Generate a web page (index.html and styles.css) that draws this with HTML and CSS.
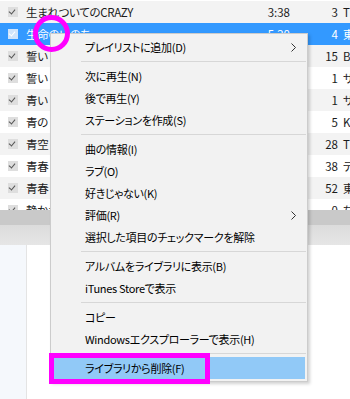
FILE: index.html
```html
<!DOCTYPE html>
<html lang="ja">
<head>
<meta charset="utf-8">
<link rel="stylesheet" href="styles.css">
</head>
<body>
<div class="page">
  <div class="list">
    <div class="row even"><span class="cb"></span><span class="title">生まれついてのCRAZY</span><span class="time">3:38</span><span class="num">3</span><span class="artist">T</span></div>
    <div class="row sel"><span class="cb"></span><span class="title">生命のいのち</span><span class="time">5:20</span><span class="num">4</span><span class="artist">東</span></div>
    <div class="row even"><span class="cb"></span><span class="title">誓い</span><span class="time">4:12</span><span class="num">15</span><span class="artist">B</span></div>
    <div class="row"><span class="cb"></span><span class="title">誓い</span><span class="time">4:01</span><span class="num">1</span><span class="artist">サ</span></div>
    <div class="row even"><span class="cb"></span><span class="title">青い</span><span class="time">3:55</span><span class="num">1</span><span class="artist">サ</span></div>
    <div class="row"><span class="cb"></span><span class="title">青の</span><span class="time">4:20</span><span class="num">5</span><span class="artist">K</span></div>
    <div class="row even"><span class="cb"></span><span class="title">青空</span><span class="time">3:48</span><span class="num">28</span><span class="artist">T</span></div>
    <div class="row"><span class="cb"></span><span class="title">青春</span><span class="time">4:33</span><span class="num">38</span><span class="artist">テ</span></div>
    <div class="row even"><span class="cb"></span><span class="title">青春</span><span class="time">5:02</span><span class="num">52</span><span class="artist">東</span></div>
    <div class="row"><span class="cb"></span><span class="title">静かな</span><span class="time">4:44</span><span class="num">0</span><span class="artist">ち</span></div>
  </div>
  <div class="hbar1"></div>
  <div class="hbar2"></div>
  <div class="bottom"><div class="side"></div><div class="main"></div></div>

  <div class="menu">
    <div class="item">プレイリストに追加(D)<svg class="chev" width="5" height="9" viewBox="0 0 5 9"><path d="M0.5 0.5 L4.5 4.5 L0.5 8.5" fill="none" stroke="#333" stroke-width="1"/></svg></div>
    <div class="sep"></div>
    <div class="item">次に再生(N)</div>
    <div class="item">後で再生(Y)</div>
    <div class="item">ステーションを作成(S)</div>
    <div class="sep"></div>
    <div class="item">曲の情報(I)</div>
    <div class="item">ラブ(O)</div>
    <div class="item">好きじゃない(K)</div>
    <div class="item">評価(R)<svg class="chev" width="5" height="9" viewBox="0 0 5 9"><path d="M0.5 0.5 L4.5 4.5 L0.5 8.5" fill="none" stroke="#333" stroke-width="1"/></svg></div>
    <div class="item">選択した項目のチェックマークを解除</div>
    <div class="sep"></div>
    <div class="item">アルバムをライブラリに表示(B)</div>
    <div class="item">iTunes Storeで表示</div>
    <div class="sep"></div>
    <div class="item">コピー</div>
    <div class="item">Windowsエクスプローラーで表示(H)</div>
    <div class="sep"></div>
    <div class="item hot">ライブラリから削除(F)</div>
  </div>

  <div class="ring"></div>
  <div class="mark"></div>
</div>
</body>
</html>
```
FILE: styles.css
```css
* { box-sizing: border-box; }
html, body { margin: 0; padding: 0; }
body {
  width: 350px;
  height: 399px;
  overflow: hidden;
  background: #ffffff;
  font-family: "Noto Sans CJK JP", "Noto Sans", sans-serif;
  font-feature-settings: "palt";
  font-size: 11px;
  letter-spacing: -0.3px;
  color: #1b1b1b;
}
.page {
  position: relative;
  width: 350px;
  height: 399px;
  display: flex;
  flex-direction: column;
}
.list {
  height: 210px;
  overflow: hidden;
  padding-top: 1px;
  flex: none;
}
.row {
  height: 22px;
  display: grid;
  grid-template-columns: 26px 200px 64px 48px 1fr;
  align-items: center;
  line-height: 22px;
  background: #ffffff;
  white-space: nowrap;
  font-size: 11.5px;
}
.row.even { background: #f3f3f3; }
.row.sel { background: #3399ff; color: #ffffff; }
.cb {
  width: 10px;
  height: 10px;
  margin-left: 8px;
  background: #dedede;
  position: relative;
}
.cb::after {
  content: "";
  position: absolute;
  left: 2px;
  top: 1px;
  width: 3px;
  height: 5px;
  border-right: 1.5px solid #555;
  border-bottom: 1.5px solid #555;
  transform: rotate(40deg);
}
.row.sel .cb { background: #cfe4fb; }
.row.sel .cb::after { border-color: #ffffff; }
.title { overflow: hidden; }
.time { text-align: right; letter-spacing: 0; }
.num { text-align: right; letter-spacing: 0; }
.artist { padding-left: 5px; }
.hbar1 { height: 15px; background: #c9c9c9; flex: none; }
.hbar2 { height: 20px; background: linear-gradient(#dcdcdc, #e6e6e6); flex: none; }
.bottom { flex: 1; display: flex; }
.side { width: 27px; background: #f5f8fc; border-right: 1px solid #e4e4e4; }
.main { flex: 1; background: #ffffff; }

.menu {
  position: absolute;
  left: 50px;
  top: 33px;
  width: 258px;
  background: #f2f2f2;
  border: 1px solid #cccccc;
  padding: 2px;
  box-shadow: 2px 2px 3px rgba(0,0,0,0.18);
  color: #000000;
}
.item {
  height: 22px;
  line-height: 22px;
  padding-left: 32px;
  display: flex;
  align-items: center;
  white-space: nowrap;
}
.item.hot { background: #91c9f7; }
.chev { margin-left: auto; margin-right: 9px; }
.sep {
  height: 7px;
  position: relative;
}
.sep::after {
  content: "";
  position: absolute;
  left: 28px;
  right: -1px;
  top: 3px;
  height: 1px;
  background: #d7d7d7;
}
.ring {
  position: absolute;
  left: 33px;
  top: 15px;
  width: 37px;
  height: 37px;
  border: 5px solid #ff00ff;
  border-radius: 50%;
}
.mark {
  position: absolute;
  left: 49px;
  top: 353px;
  width: 161px;
  height: 31px;
  border: 5px solid #ff00ff;
}
```
